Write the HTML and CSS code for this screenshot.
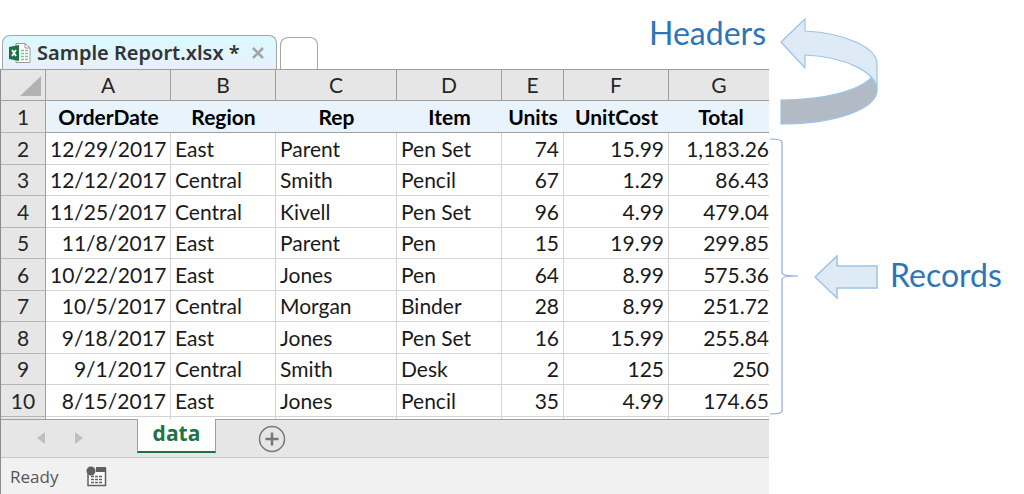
FILE: index.html
```html
<!DOCTYPE html>
<html lang="en">
<head>
    <meta charset="UTF-8">
    <meta name="viewport" content="width=device-width, initial-scale=1.0">
    <title>Sample Report.xlsx</title>
    <link rel="stylesheet" href="styles.css">
</head>
<body>
    <div class="page">
        <div class="workbook">
            <div class="top-bar">
                <div class="file-tab">
                    <svg class="excel-icon" width="22" height="22" viewBox="0 0 22 22">
                        <path d="M7 1.500H16L21 6V20.500H7Z" fill="#fff" stroke="#999"/>
                        <path d="M16 1.500V6H21" fill="none" stroke="#999"/>
                        <path d="M12 8.500H19M12 11.500H19M12 14.500H19M12 17.500H19" stroke="#7cc096" stroke-width="1.500" stroke-dasharray="3 1"/>
                        <path d="M0 5L10 3V19L0 17Z" fill="#1e7145"/>
                        <path d="M3 8L7 14M7 8L3 14" stroke="#fff" stroke-width="1.800"/>
                    </svg>
                    <span class="file-name">Sample Report.xlsx *</span>
                    <button class="close" aria-label="Close">
                        <svg width="12" height="12" viewBox="0 0 12 12"><path d="M1 1L11 11M11 1L1 11" stroke="#a3a3a3" stroke-width="2.500"/></svg>
                    </button>
                </div>
                <button class="new-tab" aria-label="New tab"></button>
                <span class="label headers-label">Headers</span>
            </div>

            <div class="sheet">
                <table>
                    <colgroup>
                        <col class="col-num"><col class="col-a"><col class="col-b"><col class="col-c">
                        <col class="col-d"><col class="col-e"><col class="col-f"><col class="col-g">
                    </colgroup>
                    <thead>
                        <tr>
                            <th class="corner"><svg width="21" height="20" viewBox="0 0 21 20"><path d="M21 0V20H0Z" fill="#b2b2b2"/></svg></th>
                            <th>A</th><th>B</th><th>C</th><th>D</th><th>E</th><th>F</th><th>G</th>
                        </tr>
                    </thead>
                    <tbody>
                        <tr class="titles"><th>1</th><td>OrderDate</td><td>Region</td><td>Rep</td><td>Item</td><td>Units</td><td>UnitCost</td><td>Total</td></tr>
                        <tr><th>2</th><td class="num">12/29/2017</td><td>East</td><td>Parent</td><td>Pen Set</td><td class="num">74</td><td class="num">15.99</td><td class="num">1,183.26</td></tr>
                        <tr><th>3</th><td class="num">12/12/2017</td><td>Central</td><td>Smith</td><td>Pencil</td><td class="num">67</td><td class="num">1.29</td><td class="num">86.43</td></tr>
                        <tr><th>4</th><td class="num">11/25/2017</td><td>Central</td><td>Kivell</td><td>Pen Set</td><td class="num">96</td><td class="num">4.99</td><td class="num">479.04</td></tr>
                        <tr><th>5</th><td class="num">11/8/2017</td><td>East</td><td>Parent</td><td>Pen</td><td class="num">15</td><td class="num">19.99</td><td class="num">299.85</td></tr>
                        <tr><th>6</th><td class="num">10/22/2017</td><td>East</td><td>Jones</td><td>Pen</td><td class="num">64</td><td class="num">8.99</td><td class="num">575.36</td></tr>
                        <tr><th>7</th><td class="num">10/5/2017</td><td>Central</td><td>Morgan</td><td>Binder</td><td class="num">28</td><td class="num">8.99</td><td class="num">251.72</td></tr>
                        <tr><th>8</th><td class="num">9/18/2017</td><td>East</td><td>Jones</td><td>Pen Set</td><td class="num">16</td><td class="num">15.99</td><td class="num">255.84</td></tr>
                        <tr><th>9</th><td class="num">9/1/2017</td><td>Central</td><td>Smith</td><td>Desk</td><td class="num">2</td><td class="num">125</td><td class="num">250</td></tr>
                        <tr><th>10</th><td class="num">8/15/2017</td><td>East</td><td>Jones</td><td>Pencil</td><td class="num">35</td><td class="num">4.99</td><td class="num">174.65</td></tr>
                        <tr class="cut"><th></th><td></td><td></td><td></td><td></td><td></td><td></td><td></td></tr>
                    </tbody>
                </table>

                <div class="sheet-bar">
                    <div class="sheet-nav">
                        <button aria-label="Previous sheet"><svg width="8" height="12" viewBox="0 0 8 12"><path d="M8 0V12L0 6Z" fill="#bfbfbf"/></svg></button>
                        <button aria-label="Next sheet"><svg width="8" height="12" viewBox="0 0 8 12"><path d="M0 0V12L8 6Z" fill="#bfbfbf"/></svg></button>
                    </div>
                    <button class="sheet-tab">data</button>
                    <button class="add-sheet" aria-label="New sheet">
                        <svg width="28" height="28" viewBox="0 0 28 28" fill="none" stroke="#777">
                            <circle cx="14" cy="14" r="12.500" stroke-width="1.500"/>
                            <path d="M14 7.500V20.500M7.500 14H20.500" stroke-width="2.500"/>
                        </svg>
                    </button>
                </div>

                <div class="status-bar">
                    <span>Ready</span>
                    <svg width="21" height="21" viewBox="0 0 21 21">
                        <path d="M2 8V19.500H19.500V2" fill="#fff" stroke="#5f5f5f" stroke-width="1.500"/>
                        <path d="M10 1H20V6H10Z" fill="#5f5f5f"/>
                        <circle cx="5" cy="5" r="4.500" fill="#5f5f5f"/>
                        <path d="M5 10.500H17M5 13.500H17M5 16.500H17" stroke="#5f5f5f" stroke-width="1.500" stroke-dasharray="3 1"/>
                    </svg>
                </div>
            </div>
        </div>

        <div class="notes">
            <svg class="curved-arrow" width="100" height="110" viewBox="0 0 100 110" stroke="#9dc3e6" stroke-width="1.200" stroke-linejoin="round">
                <path d="M1 83C44 83 78 74 91 61C95 66 97 70 97 73C97 92 55 107 1 107Z" fill="#b2bbc5"/>
                <path d="M1 25L25 2V14C66 16 97 31 97 47V73C97 56 67 40 25 38V51Z" fill="#deebf7"/>
            </svg>
            <div class="records">
                <svg width="30" height="278" viewBox="0 0 30 278" fill="none" stroke="#8faadc" stroke-width="1.200">
                    <path d="M1 1Q13 1 13 4V135Q13 138 29 138Q13 138 13 141V273Q13 276 1 276"/>
                </svg>
                <svg class="left-arrow" width="64" height="46" viewBox="0 0 64 46" fill="#deebf7" stroke="#9dc3e6" stroke-width="1.500">
                    <path d="M1 23L23 2V12H63V34H23V44Z"/>
                </svg>
                <span class="label records-label">Records</span>
            </div>
        </div>
    </div>
</body>
</html>
```
FILE: styles.css
```css
body {
    margin: 0;
    background-color: #fff;
    font-family: Lato, "Open Sans", sans-serif;
    color: #1a1a1a;
}
button {
    background: none;
    border: none;
    padding: 0;
    cursor: pointer;
}
svg {
    display: block;
    flex: none;
}
.page {
    display: grid;
    grid-template-columns: 769fr 255fr;
    min-height: 100vh;
}
.workbook {
    display: flex;
    flex-direction: column;
}
.top-bar {
    display: flex;
    align-items: flex-end;
    height: 69px;
    padding-left: 2px;
}
.file-tab {
    display: flex;
    align-items: center;
    box-sizing: border-box;
    height: 34px;
    padding: 0 12px 0 6px;
    border: 1px solid #a6a6a6;
    border-bottom: none;
    border-radius: 8px 8px 0 0;
    background: linear-gradient(#d9fbff, #e8effa);
}
.file-name {
    margin-left: 6px;
    font-family: "Noto Sans", "Open Sans", sans-serif;
    font-size: 20px;
    font-weight: 600;
    color: #333;
    white-space: nowrap;
}
.close {
    margin-left: 12px;
}
.new-tab {
    box-sizing: border-box;
    width: 38px;
    height: 32px;
    margin-left: 3px;
    border: 1px solid #a6a6a6;
    border-bottom: none;
    border-radius: 8px 8px 0 0;
}
.label {
    font-size: 32px;
    line-height: 40px;
    color: #2e75b6;
}
.headers-label {
    margin: 0 3px 16px auto;
}
.sheet {
    flex: 1;
    display: flex;
    flex-direction: column;
    border-left: 1px solid #8c8c8c;
}
table {
    width: 100%;
    table-layout: fixed;
    border-collapse: separate;
    border-spacing: 0;
    font-size: 21px;
    line-height: 24px;
}
.col-num {
    width: 45px;
}
.col-a {
    width: 125px;
}
.col-b, .col-f {
    width: 105px;
}
.col-c {
    width: 121px;
}
.col-d {
    width: 105px;
}
.col-e {
    width: 62px;
}
th, td {
    box-sizing: border-box;
    height: 31px;
    padding: 0 4px;
    border-right: 1px solid #d4d4d4;
    border-bottom: 1px solid #d4d4d4;
    text-align: left;
    white-space: nowrap;
}
tbody tr:nth-child(even) td, tbody tr:nth-child(even) th {
    height: 32px;
}
th {
    background-color: #e6e6e6;
    border-right-color: #9f9f9f;
    border-bottom-color: #b5b5b5;
    text-align: center;
    font-weight: normal;
    color: #262626;
}
thead th {
    height: 32px;
    border-top: 1px solid #9f9f9f;
    border-bottom-color: #9f9f9f;
}
.corner svg {
    margin: 2px 0 0 auto;
}
tr > :last-child {
    border-right: none;
}
td:last-child {
    padding-right: 0;
}
.titles td {
    height: 32px;
    background-color: #e9f3fc;
    border-right: none;
    border-bottom-color: #9f9f9f;
    text-align: center;
    font-weight: bold;
    color: #000;
}
.titles td:nth-child(6), .titles td:nth-child(7) {
    padding: 0;
}
.num {
    text-align: right;
}
tbody .cut th, tbody .cut td {
    height: 2px;
    border-bottom: none;
}
.sheet-bar {
    display: flex;
    align-items: flex-start;
    height: 37px;
    border-top: 1px solid #9f9f9f;
    border-bottom: 1px solid #c6c6c6;
    background-color: #e6e6e6;
}
.sheet-nav {
    display: flex;
    gap: 30px;
    padding: 12px 54px 0 36px;
}
.sheet-tab {
    box-sizing: border-box;
    width: 79px;
    height: 34px;
    margin-top: -1px;
    padding-bottom: 4px;
    border: 1px solid #9f9f9f;
    border-top: none;
    border-bottom: 2px solid #1e7145;
    background-color: #fff;
    font-family: "Open Sans", sans-serif;
    font-size: 21px;
    line-height: 26px;
    font-weight: bold;
    color: #217346;
}
.add-sheet {
    margin: 5px 0 0 42px;
}
.status-bar {
    flex: 1;
    display: flex;
    align-items: center;
    gap: 28px;
    padding-left: 9px;
    background-color: #f1f1f1;
    font-family: "Open Sans", sans-serif;
    font-size: 17px;
    color: #555;
}
.curved-arrow {
    margin: 17px 0 11px 11px;
}
.records {
    display: flex;
    align-items: center;
}
.left-arrow {
    margin: 0 12px 0 15px;
}
.records-label {
    padding-bottom: 4px;
}
```
